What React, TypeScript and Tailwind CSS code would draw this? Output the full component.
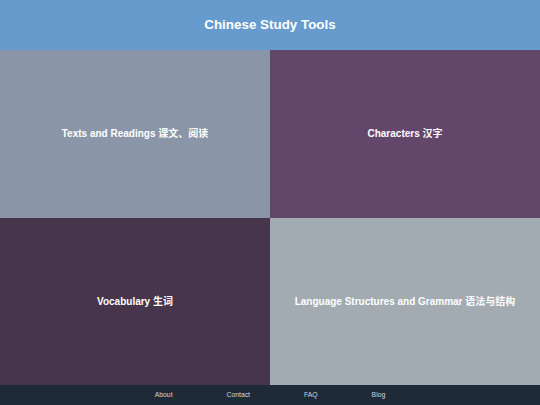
const tiles = [
  { en: 'Texts and Readings', zh: '课文、阅读', bg: 'bg-[#8b95a8]' },
  { en: 'Characters', zh: '汉字', bg: 'bg-[#63476b]' },
  { en: 'Vocabulary', zh: '生词', bg: 'bg-[#46354b]' },
  { en: 'Language Structures and Grammar', zh: '语法与结构', bg: 'bg-[#a2aab2]' },
]

const links = ['About', 'Contact', 'FAQ', 'Blog']

export default function App() {
  return (
    <div
      className="flex h-[405px] w-[540px] flex-col overflow-hidden"
      style={{ fontFamily: '"Liberation Sans", "Noto Sans CJK SC", sans-serif' }}
    >
      <header className="flex h-[50px] shrink-0 items-center justify-center bg-[#679bcd]">
        <h1 className="text-[13.4px] font-bold text-white">Chinese Study Tools</h1>
      </header>

      <main className="grid flex-1 grid-cols-2 grid-rows-2">
        {tiles.map((t) => (
          <a
            key={t.en}
            href="#"
            className={`flex items-center justify-center ${t.bg} text-[10px] font-bold text-white`}
          >
            {t.en}&nbsp;{t.zh}
          </a>
        ))}
      </main>

      <footer className="flex h-[20px] shrink-0 items-center justify-center gap-[54px] bg-[#1f2a38]">
        {links.map((l) => (
          <a key={l} href="#" className="text-[6.8px] text-[#d2d6db]">
            {l}
          </a>
        ))}
      </footer>
    </div>
  )
}
